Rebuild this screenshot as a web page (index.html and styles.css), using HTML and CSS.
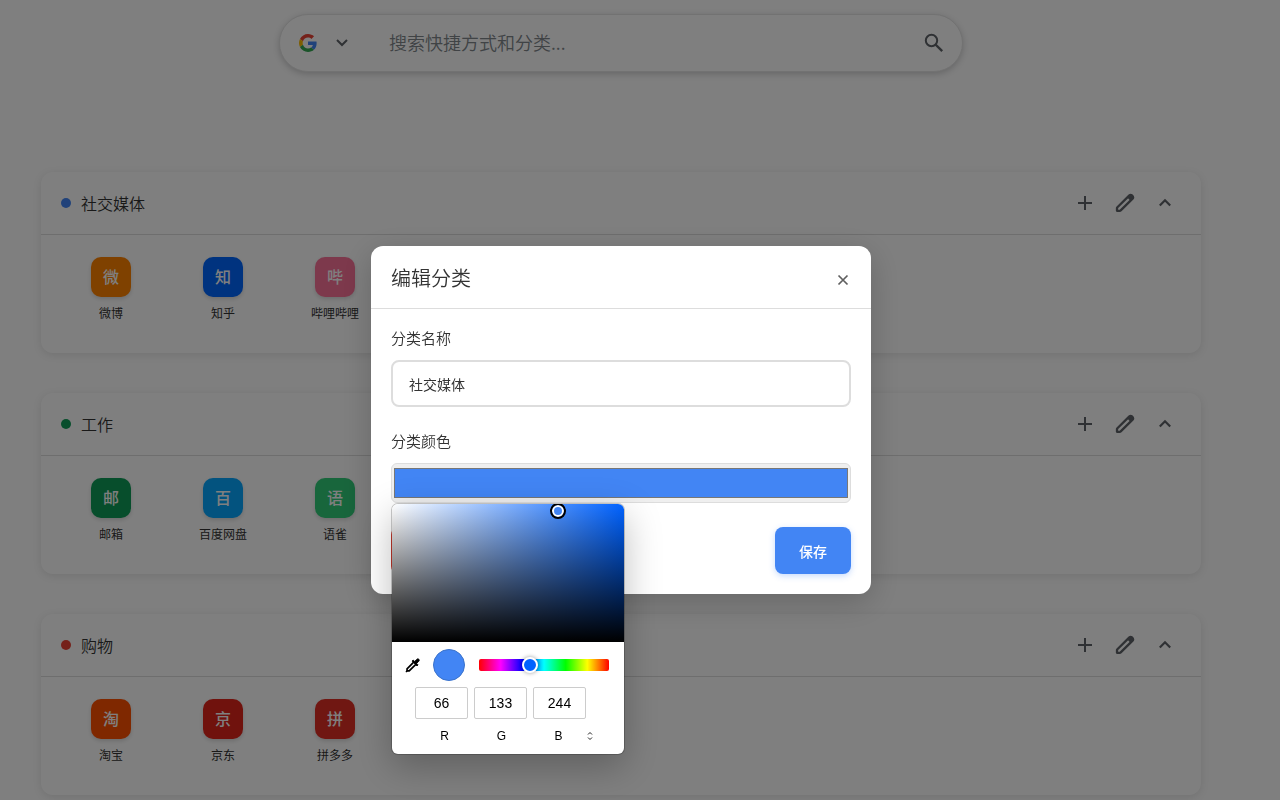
FILE: index.html
```html
<!DOCTYPE html>
<html lang="zh-CN">
<head>
<meta charset="utf-8">
<title>编辑分类</title>
<link rel="stylesheet" href="styles.css">
</head>
<body>
<svg class="sprite" aria-hidden="true">
  <symbol id="plus" viewBox="0 0 20 20"><path d="M10 3v14M3 10h14" fill="none" stroke="currentColor" stroke-width="2"/></symbol>
  <symbol id="pencil" viewBox="0 0 20 20"><path d="M2 17.800v-2.700q0-.5.400-.9L14.400 2.400q1.200-1 2.200 0l1 1q1 1.200 0 2.200L5.700 17.400q-.4.400-.9.400z" fill="none" stroke="currentColor" stroke-width="2.300" stroke-linejoin="round"/><path d="M12 4.300l3-3q1-.7 2 0l1.700 1.700q.7 1 0 2l-3 3z" fill="currentColor"/></symbol>
  <symbol id="chevron-up" viewBox="0 0 20 20"><path d="M4.800 12.500 10 7.300l5.200 5.200" fill="none" stroke="currentColor" stroke-width="2.200"/></symbol>
</svg>
<div class="page">
  <form class="search">
    <button type="button" class="engine" aria-label="搜索引擎">
      <svg width="18" height="18" viewBox="0 0 48 48"><path fill="#EA4335" d="M24 9.500c3.540 0 6.710 1.220 9.210 3.600l6.850-6.850C35.900 2.380 30.470 0 24 0 14.620 0 6.510 5.380 2.560 13.220l7.980 6.190C12.430 13.720 17.740 9.500 24 9.500z"/><path fill="#4285F4" d="M46.980 24.550c0-1.570-.15-3.090-.38-4.550H24v9.020h12.940c-.58 2.960-2.260 5.480-4.780 7.180l7.730 6c4.510-4.180 7.090-10.360 7.090-17.650z"/><path fill="#FBBC05" d="M10.530 28.590c-.48-1.450-.76-2.990-.76-4.590s.27-3.140.76-4.590l-7.980-6.190C.92 16.460 0 20.120 0 24c0 3.880.92 7.540 2.560 10.780l7.970-6.190z"/><path fill="#34A853" d="M24 48c6.480 0 11.930-2.130 15.890-5.810l-7.730-6c-2.150 1.450-4.920 2.300-8.160 2.300-6.260 0-11.570-4.220-13.470-9.910l-7.980 6.190C6.510 42.620 14.620 48 24 48z"/></svg>
      <svg width="12" height="8" viewBox="0 0 12 8"><path d="M1 1l5 5 5-5" fill="none" stroke="#5f6368" stroke-width="2"/></svg>
    </button>
    <input class="search-input" type="text" placeholder="搜索快捷方式和分类..." aria-label="搜索">
    <button type="button" class="go" aria-label="搜索">
      <svg width="20" height="20" viewBox="0 0 20 20"><circle cx="7.500" cy="7.500" r="5.700" fill="none" stroke="#5f6368" stroke-width="2"/><path d="M11.500 11.500l6.700 6.700" stroke="#5f6368" stroke-width="2.400"/></svg>
    </button>
  </form>

  <main class="cards">
    <section class="card">
      <header class="card-head"><span class="dot blue"></span><h2>社交媒体</h2>
        <button type="button" aria-label="添加"><svg><use href="#plus"/></svg></button>
        <button type="button" aria-label="编辑"><svg><use href="#pencil"/></svg></button>
        <button type="button" aria-label="折叠"><svg><use href="#chevron-up"/></svg></button>
      </header>
      <div class="links">
        <a href="#"><span class="tile weibo">微</span>微博</a>
        <a href="#"><span class="tile zhihu">知</span>知乎</a>
        <a href="#"><span class="tile bili">哔</span>哔哩哔哩</a>
      </div>
    </section>
    <section class="card">
      <header class="card-head"><span class="dot green"></span><h2>工作</h2>
        <button type="button" aria-label="添加"><svg><use href="#plus"/></svg></button>
        <button type="button" aria-label="编辑"><svg><use href="#pencil"/></svg></button>
        <button type="button" aria-label="折叠"><svg><use href="#chevron-up"/></svg></button>
      </header>
      <div class="links">
        <a href="#"><span class="tile mail">邮</span>邮箱</a>
        <a href="#"><span class="tile pan">百</span>百度网盘</a>
        <a href="#"><span class="tile yuque">语</span>语雀</a>
      </div>
    </section>
    <section class="card">
      <header class="card-head"><span class="dot red"></span><h2>购物</h2>
        <button type="button" aria-label="添加"><svg><use href="#plus"/></svg></button>
        <button type="button" aria-label="编辑"><svg><use href="#pencil"/></svg></button>
        <button type="button" aria-label="折叠"><svg><use href="#chevron-up"/></svg></button>
      </header>
      <div class="links">
        <a href="#"><span class="tile taobao">淘</span>淘宝</a>
        <a href="#"><span class="tile jd">京</span>京东</a>
        <a href="#"><span class="tile pdd">拼</span>拼多多</a>
      </div>
    </section>
  </main>
</div>

<div class="overlay">
  <div class="modal" role="dialog" aria-labelledby="modal-title">
    <header class="modal-head">
      <h1 id="modal-title">编辑分类</h1>
      <button type="button" class="close" aria-label="关闭"><svg width="12" height="12" viewBox="0 0 12 12"><path d="M1.500 1.500l9 9M10.500 1.500l-9 9" stroke="#5f5f5f" stroke-width="1.700"/></svg></button>
    </header>
    <form class="modal-body">
      <label for="name">分类名称</label>
      <input id="name" class="name" type="text" value="社交媒体">
      <label for="color">分类颜色</label>
      <div class="color-field">
        <input id="color" class="color" type="color" value="#4285f4">
        <div class="picker">
          <div class="shade"><span class="shade-knob"></span></div>
          <div class="picker-row">
            <button type="button" class="dropper" aria-label="吸管"><svg width="16" height="16" viewBox="0 0 18 18"><path d="M9.800 5.800 2.300 13.300v2.400h2.400l7.500-7.500" fill="none" stroke="#000" stroke-width="1.900"/><path d="M8 4.600l1.200-1.200 1.700 1.600 2.500-2.500q1.100-1 2.200 0 1 1.100 0 2.200l-2.500 2.500 1.600 1.700-1.200 1.200z" stroke="#000" stroke-linejoin="round" stroke-width="1"/><path d="M1 17l1.500-1.500" stroke="#000" stroke-width="1.500"/></svg></button>
            <span class="current"></span>
            <input class="hue" type="range" min="0" max="360" value="137" aria-label="色相">
          </div>
          <div class="values">
            <input id="r" type="text" value="66"><input id="g" type="text" value="133"><input id="b" type="text" value="244">
          </div>
          <div class="names">
            <label for="r">R</label><label for="g">G</label><label for="b">B</label>
            <button type="button" aria-label="切换格式"><svg width="6" height="10" viewBox="0 0 6 10"><path d="M1 3.500l2-2 2 2M1 6.500l2 2 2-2" fill="none" stroke="#222" stroke-width="1"/></svg></button>
          </div>
        </div>
      </div>
      <div class="actions">
        <button type="button" class="delete" aria-label="删除"></button>
        <button type="submit" class="save">保存</button>
      </div>
    </form>
  </div>
</div>
</body>
</html>
```
FILE: styles.css
```css
* { box-sizing: border-box; }
body {
  margin: 0;
  background: #fefefe;
  color: #333;
  font-family: "Noto Sans CJK SC", sans-serif;
  font-size: 14px;
}
button { padding: 0; border: 0; background: none; color: inherit; font: inherit; }
h1, h2 { margin: 0; font-weight: 350; }
input { font: inherit; color: inherit; }
.sprite { display: none; }

.page { padding: 14px 79px 5px 41px; }
.search {
  display: flex;
  align-items: center;
  max-width: 684px;
  height: 58px;
  margin: 0 auto 100px;
  padding: 0 18px 0 19px;
  border: 1px solid #e4e4e4;
  border-radius: 29px;
  background: #fff;
  box-shadow: 0 2px 6px rgba(32, 33, 36, .22);
}
.engine { display: flex; align-items: center; gap: 19px; }
.search-input {
  flex: 1;
  min-width: 0;
  height: 24px;
  margin: 0 0 2px 41px;
  padding: 0;
  border: 0;
  outline: 0;
  background: none;
  font-size: 18px;
  font-weight: 350;
}
.search-input::placeholder { color: #80868b; }
.go { display: flex; }

.cards { display: flex; flex-direction: column; gap: 40px; }
.card {
  height: 181px;
  border-radius: 12px;
  background: #fff;
  box-shadow: 0 2px 8px rgba(0, 0, 0, .1);
}
.card-head {
  display: flex;
  align-items: center;
  height: 63px;
  padding: 0 16px 0 20px;
  border-bottom: 1px solid #ddd;
}
.card-head h2 { flex: 1; font-size: 16px; }
.card-head button { display: flex; justify-content: center; width: 40px; color: #5f6368; }
.card-head svg { width: 20px; height: 20px; }
.dot { width: 10px; height: 10px; margin-right: 10px; border-radius: 50%; }
.blue { background: #4285f4; }
.green { background: #0f9d58; }
.red { background: #ea4335; }
.links { display: flex; gap: 12px; padding: 22px 20px; }
.links a {
  display: flex;
  flex-direction: column;
  align-items: center;
  gap: 8px;
  width: 100px;
  color: #333;
  font-size: 12px;
  line-height: 16px;
  text-decoration: none;
}
.tile {
  display: grid;
  place-items: center;
  width: 40px;
  height: 40px;
  padding-bottom: 2px;
  border-radius: 10px;
  color: #fff;
  font-size: 16px;
  font-weight: 500;
  box-shadow: 0 2px 4px rgba(0, 0, 0, .15);
}
.weibo { background: #ff8200; }
.zhihu { background: #0066ff; }
.bili { background: #fb7299; }
.mail { background: #0f9d58; }
.pan { background: #06a7ff; }
.yuque { background: #31cc79; }
.taobao { background: #ff5000; }
.jd { background: #e1251b; }
.pdd { background: #e02e24; }

.overlay {
  position: fixed;
  inset: 0;
  display: flex;
  align-items: center;
  justify-content: center;
  padding: 40px 38px 0 0;
  background: rgba(0, 0, 0, .5);
}
.modal {
  width: 100%;
  max-width: 500px;
  border-radius: 12px;
  background: #fff;
  box-shadow: 0 8px 32px rgba(0, 0, 0, .2);
}
.modal-head {
  display: flex;
  align-items: center;
  justify-content: space-between;
  height: 63px;
  padding: 0 22px 0 20px;
  border-bottom: 1px solid #ddd;
}
.modal-head h1 { font-size: 20px; }
.close { display: flex; padding-top: 6px; }
.modal-body { display: flex; flex-direction: column; padding: 20px; }
.modal-body > label { margin-bottom: 14px; font-size: 15px; line-height: 17px; font-weight: 350; }
.name {
  height: 47px;
  margin-bottom: 25px;
  padding: 0 16px;
  border: 2px solid #ddd;
  border-radius: 8px;
  outline: 0;
  background: #fff;
}
.color-field { position: relative; }
.color {
  display: block;
  width: 100%;
  height: 40px;
  padding: 0;
  border: 1px solid #ddd;
  border-radius: 6px;
  background: #efefef;
}
.actions { display: flex; justify-content: space-between; margin-top: 24px; }
.actions button { width: 76px; height: 47px; border-radius: 8px; }
.save { background: #4285f4; color: #fff; font-weight: 500; box-shadow: 0 2px 6px rgba(66, 133, 244, .3); }
.delete { background: #ea4335; }

.picker {
  position: absolute;
  top: 100%;
  left: 0;
  width: 234px;
  height: 252px;
  border: 1px solid rgba(0, 0, 0, .2);
  border-radius: 7px;
  background: #fff;
  background-clip: padding-box;
  box-shadow: 0 12px 36px rgba(0, 0, 0, .25);
  color: #000;
  font-family: "Liberation Sans", sans-serif;
}
.shade {
  position: relative;
  height: 138px;
  overflow: hidden;
  border-radius: 6px 6px 0 0;
  background: linear-gradient(transparent, #000), linear-gradient(to right, #fff, #0062ff);
}
.shade-knob {
  position: absolute;
  top: -1px;
  left: 158px;
  width: 16px;
  height: 16px;
  border: 2px solid #000;
  border-radius: 50%;
  background: #4285f4;
  box-shadow: inset 0 0 0 2px #fff;
}
.picker-row { display: flex; align-items: center; height: 45px; padding: 0 15px 0 13px; }
.dropper { display: flex; }
.current {
  width: 32px;
  height: 32px;
  margin: 0 14px 0 12px;
  border: 1px solid #3b73cb;
  border-radius: 50%;
  background: #4285f4;
}
.hue {
  flex: 1;
  min-width: 0;
  height: 12px;
  margin: 0;
  border-radius: 2px;
  appearance: none;
  background: linear-gradient(to right, #f00, #f0f, #00f, #0ff, #0f0, #ff0, #f00);
}
.hue::-webkit-slider-thumb {
  width: 16px;
  height: 16px;
  border: 2px solid #fff;
  border-radius: 50%;
  appearance: none;
  background: #0062ff;
  box-shadow: 0 0 4px rgba(0, 0, 0, .4);
}
.values { display: flex; gap: 6px; padding: 0 38px 0 23px; }
.values input {
  flex: 1;
  min-width: 0;
  height: 32px;
  padding: 0;
  border: 1px solid #ccc;
  border-radius: 2px;
  background: #fff;
  text-align: center;
}
.names {
  display: grid;
  grid-template-columns: repeat(3, 57px) 8px;
  align-items: center;
  padding: 9px 0 0 24px;
  font-size: 12px;
  line-height: 16px;
  text-align: center;
}
.names button { display: flex; }
```
